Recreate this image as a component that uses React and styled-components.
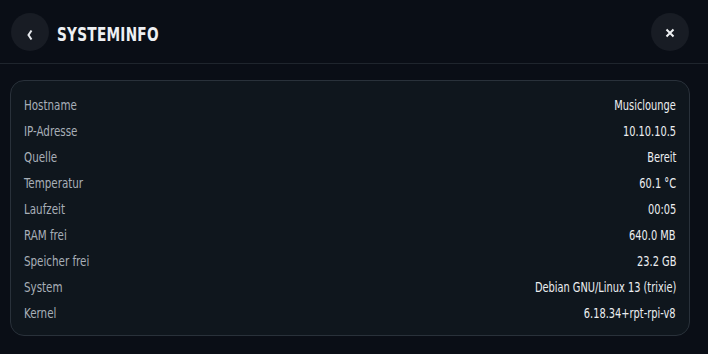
import styled, { createGlobalStyle } from 'styled-components';

const GlobalStyle = createGlobalStyle`
  html, body {
    margin: 0;
    padding: 0;
    background: #080b11;
  }
  body {
    font-family: "DejaVu Sans Condensed", "DejaVu Sans", sans-serif;
    font-stretch: condensed;
  }
`;

const Panel = styled.div`
  width: 708px;
  height: 354px;
  box-sizing: border-box;
  background: #0a0e16;
  display: flex;
  flex-direction: column;
`;

const Header = styled.div`
  height: 64px;
  box-sizing: border-box;
  display: flex;
  align-items: center;
  padding: 2px 19px 0 11px;
  border-bottom: 1px solid #1f252d;
  gap: 8px;
`;

const RoundButton = styled.button`
  width: 38px;
  height: 38px;
  border-radius: 50%;
  border: none;
  background: #181c24;
  color: #e8ebef;
  display: flex;
  align-items: center;
  justify-content: center;
  padding: ${(p) => p.$pad || 0};
  cursor: pointer;
  margin-top: -2px;
`;

const Title = styled.h1`
  flex: 1;
  margin: 2px 0 0;
  color: #eef0f3;
  font-weight: 700;
  font-size: 19px;
  letter-spacing: 0.3px;
  transform: scaleX(0.8);
  transform-origin: left center;
`;

const Body = styled.div`
  flex: 1;
  padding: 16px 18px 0 10px;
`;

const Card = styled.div`
  background: #0f161d;
  border: 1px solid #29313a;
  border-radius: 14px;
  padding: 11px 13px 9px 13px;
`;

const Row = styled.div`
  height: 26px;
  display: flex;
  align-items: center;
  justify-content: space-between;
  font-size: 14px;
`;

const Label = styled.span`
  display: inline-block;
  color: #a8afb8;
  transform: scaleX(0.82);
  transform-origin: left center;
`;

const Value = styled.span`
  display: inline-block;
  color: #eceef1;
  font-weight: 500;
  transform: scaleX(0.78);
  transform-origin: right center;
`;

const rows = [
  ['Hostname', 'Musiclounge'],
  ['IP-Adresse', '10.10.10.5'],
  ['Quelle', 'Bereit'],
  ['Temperatur', '60.1 °C'],
  ['Laufzeit', '00:05'],
  ['RAM frei', '640.0 MB'],
  ['Speicher frei', '23.2 GB'],
  ['System', 'Debian GNU/Linux 13 (trixie)'],
  ['Kernel', '6.18.34+rpt-rpi-v8'],
];

const App = () => {
  return (
    <>
      <GlobalStyle />
      <Panel>
        <Header>
          <RoundButton $pad="6px 0 0" aria-label="Zurück">
            <svg width="8" height="12" viewBox="0 0 8 12">
              <path d="M5.5 1.5 L2.5 6 L5.5 10.5" fill="none" stroke="#e8ebef" strokeWidth="2" />
            </svg>
          </RoundButton>
          <Title>SYSTEMINFO</Title>
          <RoundButton $pad="2px 0 0" aria-label="Schließen">
            <svg width="10" height="10" viewBox="0 0 10 10">
              <path d="M1.5 1.5 L8.5 8.5 M8.5 1.5 L1.5 8.5" stroke="#eef0f3" strokeWidth="2" />
            </svg>
          </RoundButton>
        </Header>
        <Body>
          <Card>
            {rows.map(([label, value]) => (
              <Row key={label}>
                <Label>{label}</Label>
                <Value>{value}</Value>
              </Row>
            ))}
          </Card>
        </Body>
      </Panel>
    </>
  );
};

export default App;
